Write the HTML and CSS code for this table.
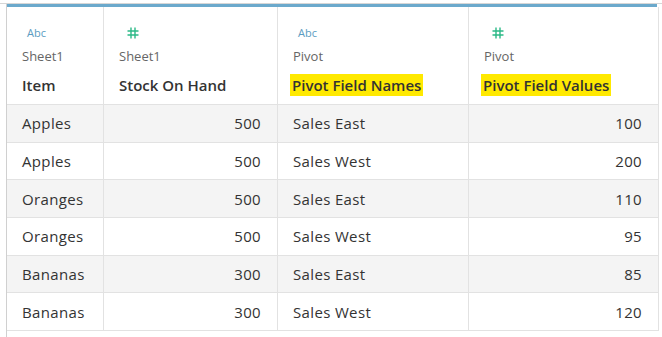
FILE: index.html
```html
<!DOCTYPE html>
<html>
<head>
<meta charset="utf-8">
<link rel="stylesheet" href="styles.css">
</head>
<body>
<div class="top-rule"></div>
<div class="grid">
  <div class="accent"></div>
  <div class="row head">
    <div class="cell">
      <span class="ico abc">Abc</span>
      <span class="src">Sheet1</span>
      <span class="name">Item</span>
    </div>
    <div class="cell">
      <svg class="ico hash" width="12" height="12" viewBox="0 0 12 12"><path d="M4 0.5V11.5M8 0.5V11.5M0.5 4H11.5M0.5 8H11.5" stroke="#2bb987" stroke-width="1.4" fill="none"/></svg>
      <span class="src">Sheet1</span>
      <span class="name">Stock On Hand</span>
    </div>
    <div class="cell">
      <span class="ico abc">Abc</span>
      <span class="src">Pivot</span>
      <span class="name"><span class="hl">Pivot Field Names</span></span>
    </div>
    <div class="cell">
      <svg class="ico hash" width="12" height="12" viewBox="0 0 12 12"><path d="M4 0.5V11.5M8 0.5V11.5M0.5 4H11.5M0.5 8H11.5" stroke="#2bb987" stroke-width="1.4" fill="none"/></svg>
      <span class="src">Pivot</span>
      <span class="name"><span class="hl">Pivot Field Values</span></span>
    </div>
  </div>
  <div class="row data shade"><div class="cell">Apples</div><div class="cell num">500</div><div class="cell">Sales East</div><div class="cell num">100</div></div>
  <div class="row data"><div class="cell">Apples</div><div class="cell num">500</div><div class="cell">Sales West</div><div class="cell num">200</div></div>
  <div class="row data shade"><div class="cell">Oranges</div><div class="cell num">500</div><div class="cell">Sales East</div><div class="cell num">110</div></div>
  <div class="row data"><div class="cell">Oranges</div><div class="cell num">500</div><div class="cell">Sales West</div><div class="cell num">95</div></div>
  <div class="row data shade"><div class="cell">Bananas</div><div class="cell num">300</div><div class="cell">Sales East</div><div class="cell num">85</div></div>
  <div class="row data"><div class="cell">Bananas</div><div class="cell num">300</div><div class="cell">Sales West</div><div class="cell num">120</div></div>
</div>
</body>
</html>
```
FILE: styles.css
```css
html, body {
  margin: 0;
  padding: 0;
  background: #ffffff;
  font-family: "Open Sans", "Liberation Sans", sans-serif;
  color: #333333;
}
.top-rule {
  margin-top: 3px;
  height: 1px;
  background: #d6d6d6;
}
.grid {
  margin-left: 6px;
  width: 652px;
  min-height: 333px;
  border-left: 1px solid #d0d0d0;
}
.accent {
  height: 3px;
  width: 650px;
  background: #6ba9cc;
}
.row {
  display: grid;
  grid-template-columns: 97px 174px 191px 190px;
  border-bottom: 1px solid #e2e2e2;
  box-sizing: border-box;
}
.row .cell {
  border-right: 1px solid #e2e2e2;
  padding: 0 16px 0 15px;
  box-sizing: border-box;
}
.head {
  height: 98px;
}
.head .cell {
  display: flex;
  flex-direction: column;
  align-items: flex-start;
  padding-top: 20px;
}
.ico {
  height: 12px;
  display: block;
}
.abc {
  font-size: 11px;
  line-height: 12px;
  color: #5a9cc1;
  margin-left: 5px;
}
.hash { margin-left: 8px; }
.src {
  margin-top: 9px;
  font-size: 13px;
  line-height: 16px;
  color: #666666;
}
.name {
  margin-top: 11px;
  font-size: 15px;
  line-height: 20px;
  font-weight: 600;
  color: #333333;
}
.hl {
  background: #ffe900;
  padding: 1px 2px;
  margin-left: -3px;
}
.data {
  height: 37.67px;
  align-items: center;
  font-size: 15px;
  letter-spacing: 0.35px;
}
.data .cell {
  height: 100%;
  display: flex;
  align-items: center;
}
.data .cell.num {
  justify-content: flex-end;
}
.shade { background: #f4f4f4; }
```
